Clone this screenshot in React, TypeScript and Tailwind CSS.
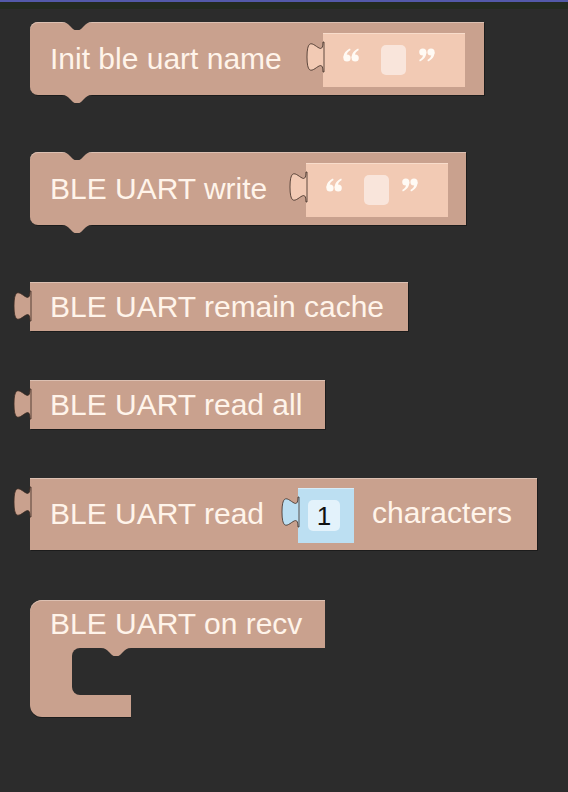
function Bump({ className, fill }: { className: string; fill: string }) {
  return (
    <svg className={className} width="30" height="8" viewBox="0 0 30 8" fill={fill}>
      <path d="M0 0C4 0 6 2 8 4L11 7C12 8 13 8 15 8C17 8 18 8 19 7L22 4C24 2 26 0 30 0Z" />
    </svg>
  );
}

function Tab({ className, fill }: { className: string; fill: string }) {
  return (
    <svg className={className} width="17" height="30" viewBox="0 0 17 30" overflow="visible">
      <path d="M17 0H16C16 20 0 -16 0 15S16 10 16 30H17Z" fill={fill} stroke="#3a2a22" strokeWidth="0.8" />
    </svg>
  );
}

// blockly draws its quote marks as little images, so do the same
function Quote({ close }: { close?: boolean }) {
  return (
    <svg width="16" height="14" viewBox="0 0 16 14" fill="#fffaf4" className={close ? "rotate-180" : ""}>
      <circle cx="4" cy="10" r="3.6" />
      <path d="M0.4 10C0.4 5.5 2.8 2.4 7 0.5L7.6 1.9C4.9 3.5 3.7 5.4 3.7 7.2Z" />
      <circle cx="12.2" cy="10" r="3.6" />
      <path d="M8.6 10C8.6 5.5 11 2.4 15.2 0.5L15.8 1.9C13.1 3.5 11.9 5.4 11.9 7.2Z" />
    </svg>
  );
}

function StringInput({ className }: { className: string }) {
  return (
    <div className={`relative flex h-[54px] w-[142px] items-center bg-[#f2cab4] pl-[20px] shadow-[inset_0_1px_0_#f8dccb] ${className}`}>
      <Tab className="absolute right-full top-[9px] -mr-px" fill="#f2cab4" />
      <span className="-translate-y-[5px]">
        <Quote />
      </span>
      <span className="ml-[22px] h-[30px] w-[25px] rounded-[5px] bg-[#f9e5db]" />
      <span className="ml-[13px] -translate-y-[5px]">
        <Quote close />
      </span>
    </div>
  );
}

function Label({ children }: { children: string }) {
  return <span className="whitespace-nowrap text-[30px] leading-none text-[#fff4ea]">{children}</span>;
}

export default function App() {
  return (
    <div className="min-h-[792px] w-full bg-[#2c2c2c] font-['Liberation_Sans',Arial,sans-serif]">
      <div className="h-[2px] bg-[#535aa8]" />
      <div className="h-[7px] bg-[#232b20]" />
      <div className="flex flex-col items-start pl-[30px] pt-[13px]">
        {/* statement: init */}
        <div className="relative flex h-[73px] w-[454px] items-center rounded-l-[8px] bg-[#c9a18e] pl-[20px] shadow-[inset_0_1px_0_#dcc0b2,1px_1px_0_#1c1c1c]">
          <Label>Init ble uart name</Label>
          <StringInput className="ml-[41px] mt-[3px]" />
          <Bump className="absolute left-[32px] top-0" fill="#2c2c2c" />
          <Bump className="absolute left-[32px] top-full" fill="#c9a18e" />
        </div>

        {/* statement: write */}
        <div className="relative mt-[57px] flex h-[73px] w-[436px] items-center rounded-l-[8px] bg-[#c9a18e] pl-[20px] shadow-[inset_0_1px_0_#dcc0b2,1px_1px_0_#1c1c1c]">
          <Label>BLE UART write</Label>
          <StringInput className="ml-[39px] mt-[3px]" />
          <Bump className="absolute left-[32px] top-0" fill="#2c2c2c" />
          <Bump className="absolute left-[32px] top-full" fill="#c9a18e" />
        </div>

        {/* value blocks */}
        <div className="relative mt-[57px] flex h-[49px] w-[378px] items-center bg-[#c9a18e] pl-[20px] shadow-[inset_0_1px_0_#dcc0b2,1px_1px_0_#1c1c1c]">
          <Tab className="absolute right-full top-[9px] -mr-px" fill="#c9a18e" />
          <Label>BLE UART remain cache</Label>
        </div>

        <div className="relative mt-[49px] flex h-[49px] w-[295px] items-center bg-[#c9a18e] pl-[20px] shadow-[inset_0_1px_0_#dcc0b2,1px_1px_0_#1c1c1c]">
          <Tab className="absolute right-full top-[9px] -mr-px" fill="#c9a18e" />
          <Label>BLE UART read all</Label>
        </div>

        <div className="relative mt-[49px] flex h-[72px] w-[507px] items-center bg-[#c9a18e] pl-[20px] shadow-[inset_0_1px_0_#dcc0b2,1px_1px_0_#1c1c1c]">
          <Tab className="absolute right-full top-[9px] -mr-px" fill="#c9a18e" />
          <Label>BLE UART read</Label>
          <div className="relative ml-[34px] mt-[3px] flex h-[55px] w-[56px] items-center bg-[#bcdff2] pl-[10px] shadow-[inset_0_1px_0_#d6ecf8]">
            <Tab className="absolute right-full top-[9px] -mr-px" fill="#bcdff2" />
            <span className="flex h-[31px] w-[32px] items-center justify-center rounded-[5px] bg-[#e3f2fb] text-[26px] leading-none text-[#111]">1</span>
          </div>
          <span className="ml-[18px]">
            <Label>characters</Label>
          </span>
        </div>

        {/* event block */}
        <div className="relative mt-[50px] flex flex-col">
          <div className="flex h-[48px] w-[295px] items-center rounded-tl-[12px] bg-[#c9a18e] pl-[20px] shadow-[inset_0_1px_0_#dcc0b2]">
            <Label>BLE UART on recv</Label>
          </div>
          <div className="relative h-[69px] w-[101px] rounded-bl-[12px] bg-[#c9a18e] shadow-[0_1px_0_#1c1c1c]">
            <div className="ml-[42px] h-[47px] rounded-l-[8px] bg-[#2c2c2c]" />
            <Bump className="absolute left-[71px] top-0" fill="#c9a18e" />
          </div>
        </div>
      </div>
    </div>
  );
}
